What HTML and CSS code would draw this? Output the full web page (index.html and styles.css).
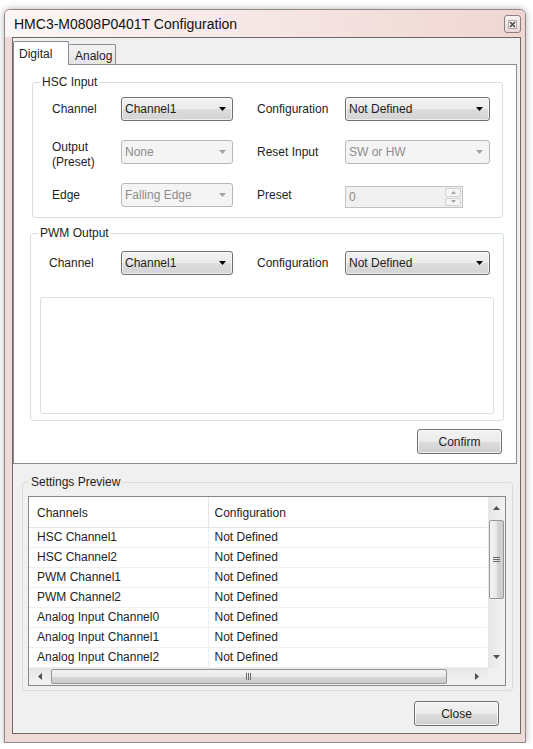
FILE: index.html
```html
<!DOCTYPE html>
<html lang="en">
<head>
    <meta charset="UTF-8">
    <meta name="viewport" content="width=device-width, initial-scale=1.0">
    <title>HMC3-M0808P0401T Configuration</title>
    <link rel="stylesheet" href="styles.css">
</head>
<body>
<div class="window">
    <div class="titlebar">
        <span class="title">HMC3-M0808P0401T Configuration</span>
        <div class="close-x">
            <svg width="9" height="9" viewBox="0 0 9 9"><rect x="0.5" y="0.5" width="8" height="8" fill="#f4ecec" stroke="#b5aaaa"/><path d="M2 2l5 5M7 2l-5 5" stroke="#4a4a4a" stroke-width="1.6"/></svg>
        </div>
    </div>

    <div class="client">
        <div class="tabs">
            <div class="tab active">Digital</div>
            <div class="tab">Analog</div>
        </div>

        <div class="tab-panel">
            <!-- HSC input -->
            <div class="group hsc">
                <div class="group-title">HSC Input</div>
                <div class="form-grid hsc-grid">
                    <div class="label">Channel</div>
                    <div class="combo"><span>Channel1</span><svg width="7" height="4"><path d="M0 0h7L3.5 4z" fill="#000"/></svg></div>
                    <div class="label right">Configuration</div>
                    <div class="combo"><span>Not Defined</span><svg width="7" height="4"><path d="M0 0h7L3.5 4z" fill="#000"/></svg></div>

                    <div class="label two-line">Output<br>(Preset)</div>
                    <div class="combo disabled"><span>None</span><svg width="7" height="4"><path d="M0 0h7L3.5 4z" fill="#a3a3a3"/></svg></div>
                    <div class="label right">Reset Input</div>
                    <div class="combo disabled"><span>SW or HW</span><svg width="7" height="4"><path d="M0 0h7L3.5 4z" fill="#a3a3a3"/></svg></div>

                    <div class="label">Edge</div>
                    <div class="combo disabled"><span>Falling Edge</span><svg width="7" height="4"><path d="M0 0h7L3.5 4z" fill="#a3a3a3"/></svg></div>
                    <div class="label right">Preset</div>
                    <div class="spin">
                        <span class="spin-value">0</span>
                        <div class="spin-btns">
                            <div class="spin-btn"><svg width="5" height="3"><path d="M0 3h5L2.5 0z" fill="#a3a3a3"/></svg></div>
                            <div class="spin-btn"><svg width="5" height="3"><path d="M0 0h5L2.5 3z" fill="#a3a3a3"/></svg></div>
                        </div>
                    </div>
                </div>
            </div>

            <!-- PWM output -->
            <div class="group pwm">
                <div class="group-title">PWM Output</div>
                <div class="form-grid pwm-grid">
                    <div class="label">Channel</div>
                    <div class="combo"><span>Channel1</span><svg width="7" height="4"><path d="M0 0h7L3.5 4z" fill="#000"/></svg></div>
                    <div class="label right">Configuration</div>
                    <div class="combo"><span>Not Defined</span><svg width="7" height="4"><path d="M0 0h7L3.5 4z" fill="#000"/></svg></div>
                </div>
                <div class="pwm-box"></div>
            </div>

            <button class="btn confirm">Confirm</button>
        </div>

        <!-- preview -->
        <div class="group preview">
            <div class="group-title">Settings Preview</div>
            <div class="listview">
                <div class="list-body">
                    <table class="list">
                        <thead>
                            <tr><th class="col1">Channels</th><th>Configuration</th></tr>
                        </thead>
                        <tbody>
                            <tr><td class="col1">HSC Channel1</td><td>Not Defined</td></tr>
                            <tr><td class="col1">HSC Channel2</td><td>Not Defined</td></tr>
                            <tr><td class="col1">PWM Channel1</td><td>Not Defined</td></tr>
                            <tr><td class="col1">PWM Channel2</td><td>Not Defined</td></tr>
                            <tr><td class="col1">Analog Input Channel0</td><td>Not Defined</td></tr>
                            <tr><td class="col1">Analog Input Channel1</td><td>Not Defined</td></tr>
                            <tr><td class="col1">Analog Input Channel2</td><td>Not Defined</td></tr>
                        </tbody>
                    </table>
                </div>
                <div class="vscroll">
                    <div class="sb-btn v"><svg width="7" height="4"><path d="M0 4h7L3.5 0z" fill="#505050"/></svg></div>
                    <div class="thumb v">
                        <svg width="7" height="6"><path d="M0 0.5h7M0 2.5h7M0 4.5h7" stroke="#6a6a6a"/></svg>
                    </div>
                    <div class="sb-track"></div>
                    <div class="sb-btn v"><svg width="7" height="4"><path d="M0 0h7L3.5 4z" fill="#505050"/></svg></div>
                </div>
                <div class="hscroll">
                    <div class="sb-btn h"><svg width="4" height="7"><path d="M4 0v7L0 3.5z" fill="#505050"/></svg></div>
                    <div class="thumb h">
                        <svg width="6" height="7"><path d="M0.5 0v7M2.5 0v7M4.5 0v7" stroke="#6a6a6a"/></svg>
                    </div>
                    <div class="sb-track"></div>
                    <div class="sb-btn h"><svg width="4" height="7"><path d="M0 0v7L4 3.5z" fill="#505050"/></svg></div>
                </div>
                <div class="sb-corner"></div>
            </div>
        </div>

        <button class="btn close">Close</button>
    </div>
</div>
</body>
</html>
```

FILE: styles.css
```css
* {
    box-sizing: border-box;
}
body {
    margin: 0;
    background: #fff;
    font-family: "Liberation Sans", Arial, sans-serif;
    font-size: 12px;
    color: #1e1e1e;
}
.window {
    width: 522px;
    height: 734px;
    margin: 9px 0 0 4px;
    border: 1px solid #948887;
    border-radius: 6px 6px 0 0;
    background: #eedad6;
    box-shadow: 0 0 7px rgba(0, 0, 0, 0.3);
    display: flex;
    flex-direction: column;
}
.titlebar {
    height: 27px;
    flex: none;
    display: flex;
    align-items: center;
    justify-content: space-between;
    padding: 0 4px 0 9px;
    border-radius: 5px 5px 0 0;
    background: linear-gradient(to right, #fbf6f5, #f6e8e6 45%, #efd6d2);
}
.title {
    font-size: 14px;
    color: #111;
}
.close-x {
    width: 17px;
    height: 18px;
    margin-top: 1px;
    border: 1px solid #8c8281;
    border-radius: 3px;
    background: linear-gradient(#f9f1f0, #ead8d5);
    display: flex;
    align-items: center;
    justify-content: center;
}
.client {
    height: 697px;
    flex: none;
    margin: 0 4px 0 7px;
    border: 1px solid #6e6868;
    background: #f0f0f0;
    padding: 3px 3px 0 0;
    display: flex;
    flex-direction: column;
}

/* tabs */
.tabs {
    height: 23px;
    display: flex;
    align-items: flex-end;
}
.tab {
    border: 1px solid #898c95;
    border-bottom: none;
    border-radius: 2px 2px 0 0;
}
.tab.active {
    width: 56px;
    height: 24px;
    margin-bottom: -1px;
    padding: 5px 0 0 5px;
    background: #fff;
    position: relative;
    z-index: 1;
}
.tab:not(.active) {
    width: 47px;
    height: 20px;
    padding: 4px 0 0 6px;
    border-left: none;
    background: linear-gradient(#f3f3f3, #e4e4e4);
}
.tab-panel {
    height: 400px;
    border: 1px solid #898c95;
    background: #fff;
    display: flex;
    flex-direction: column;
}

/* group boxes */
.group {
    border: 1px solid #d5dfe5;
    border-radius: 3px;
}
.group-title {
    width: fit-content;
    margin: -8px 0 0 7px;
    padding: 0 2px;
    line-height: 14px;
    background: #fff;
}
.hsc {
    width: 471px;
    height: 136px;
    margin: 17px 0 0 18px;
}
.pwm {
    width: 474px;
    height: 188px;
    margin: 15px 0 0 16px;
}
.preview {
    width: 491px;
    height: 209px;
    margin: 18px 0 0 9px;
    border-color: #dcdcdc;
}
.preview .group-title {
    margin-left: 6px;
    background: #f0f0f0;
}

.form-grid {
    display: grid;
    grid-auto-rows: 24px;
    row-gap: 19px;
    align-items: center;
}
.hsc-grid {
    grid-template-columns: 69px 112px 112px 145px;
    margin-top: 8px;
    padding-left: 19px;
}
.pwm-grid {
    grid-template-columns: 72px 112px 112px 145px;
    margin-top: 11px;
    padding-left: 18px;
}
.label.right {
    padding-left: 24px;
}
.label.two-line {
    line-height: 15px;
    padding-top: 6px;
}

.combo {
    height: 24px;
    display: flex;
    align-items: center;
    justify-content: space-between;
    padding: 0 6px 0 3px;
    border: 1px solid #707070;
    border-radius: 3px;
    background: linear-gradient(#f2f2f2, #ebebeb 50%, #dddddd 51%, #d3d3d3);
    box-shadow: inset 0 0 0 1px rgba(255, 255, 255, 0.6);
}
.combo.disabled {
    border-color: #b4b8bb;
    background: #f4f4f4;
    box-shadow: none;
    color: #8d8d8d;
}
.spin {
    height: 22px;
    margin-top: 4px;
    width: 118px;
    display: flex;
    border: 1px solid #bfc3c6;
    background: #f0f0f0;
    color: #8d8d8d;
}
.spin-value {
    flex: 1;
    padding: 3px 0 0 3px;
}
.spin-btns {
    width: 18px;
    display: flex;
    flex-direction: column;
    gap: 1px;
    padding: 1px;
}
.spin-btn {
    flex: 1;
    border: 1px solid #d2d2d2;
    border-radius: 2px;
    background: #f4f4f4;
    display: flex;
    align-items: center;
    justify-content: center;
}
.pwm-box {
    width: 454px;
    height: 117px;
    margin: 22px 0 0 9px;
    border: 1px solid #dedede;
    border-radius: 3px;
}

/* buttons */
.btn {
    width: 85px;
    height: 25px;
    align-self: flex-end;
    border: 1px solid #707070;
    border-radius: 3px;
    background: linear-gradient(#f2f2f2, #ebebeb 50%, #dddddd 51%, #cfcfcf);
    box-shadow: inset 0 0 0 1px rgba(255, 255, 255, 0.7);
    font-family: inherit;
    font-size: 12px;
    color: #1e1e1e;
    padding: 0;
}
.confirm {
    margin: 8px 14px 0 0;
}
.close {
    margin: 10px 18px 0 0;
}

/* list view */
.listview {
    width: 478px;
    height: 190px;
    margin: 7px 0 0 5px;
    border: 1px solid #828790;
    background: #fff;
    display: grid;
    grid-template-columns: 1fr 17px;
    grid-template-rows: 1fr 17px;
}
.list-body {
    overflow: hidden;
}
.list {
    width: 458px;
    table-layout: fixed;
    border-collapse: collapse;
}
.list th {
    height: 30px;
    padding: 3px 0 0 6px;
    text-align: left;
    font-weight: normal;
    border-bottom: 1px solid #e5e5e5;
}
.list td {
    height: 20px;
    padding: 0 0 0 6px;
    line-height: 19px;
    border-bottom: 1px solid #f0f0f0;
    white-space: nowrap;
}
.list .col1 {
    width: 179px;
    padding-left: 8px;
    border-right: 1px solid #f0f0f0;
}
.list th.col1 {
    border-right-color: #e5e5e5;
}

.vscroll, .hscroll {
    display: flex;
    background: linear-gradient(to right, #e6e6e6, #f3f3f3);
}
.vscroll {
    flex-direction: column;
}
.hscroll {
    background: linear-gradient(#e6e6e6, #f3f3f3);
}
.sb-btn {
    flex: none;
    display: flex;
    align-items: center;
    justify-content: center;
}
.sb-btn.v {
    height: 22px;
}
.sb-btn.h {
    width: 22px;
}
.sb-track {
    flex: 1;
}
.thumb {
    flex: none;
    display: flex;
    align-items: center;
    justify-content: center;
    border: 1px solid #979797;
    border-radius: 2px;
}
.thumb.v {
    height: 79px;
    margin: 1px 1px 0;
    background: linear-gradient(to right, #f4f4f4, #e8e8e8 50%, #d6d6d6 51%, #cdcdcd);
}
.thumb.h {
    width: 396px;
    margin: 1px 0;
    background: linear-gradient(#f4f4f4, #e8e8e8 50%, #d6d6d6 51%, #cdcdcd);
}
.sb-corner {
    background: #f0f0f0;
}
```
